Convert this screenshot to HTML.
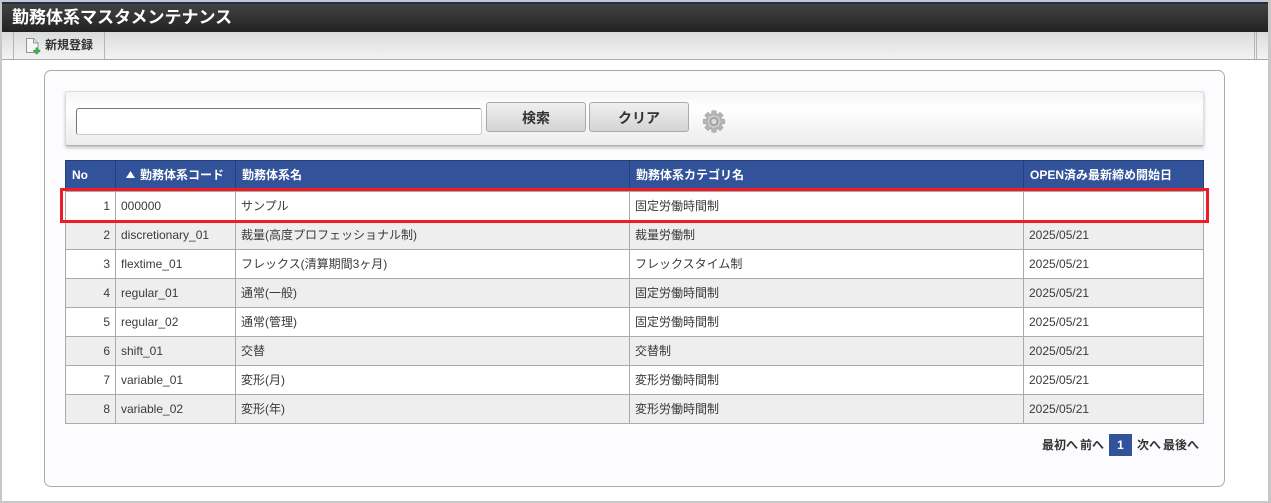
<!DOCTYPE html>
<html><head><meta charset="utf-8"><style>
html,body{margin:0;padding:0}
body{width:1271px;height:503px;position:relative;overflow:hidden;background:#fff;font-family:"Liberation Sans","Noto Sans CJK JP",sans-serif;color:#333}
div,span{position:absolute;box-sizing:border-box;white-space:nowrap}
.c{font-size:12px;line-height:16px;color:#3a3a3a}
.h{font-size:12px;font-weight:bold;color:#fff;line-height:16px}
.row{left:65px;width:1139px;height:29px;border-bottom:1px solid #aaa}
.v{width:1px;background:#aaa}
.hv{width:1px;background:#233f78;top:161px;height:29px}
.btn{top:102px;width:100px;height:30px;border:1px solid #aaa;border-radius:3px;background:linear-gradient(#f0f0f0,#d4d4d4);font-size:14px;font-weight:bold;text-align:center;line-height:30px;color:#333}
.p{font-size:12px;font-weight:bold;color:#333;line-height:16px;top:437px}
</style></head><body>
<div style="left:0;top:0;width:1271px;height:503px;border:solid #c8c8c8;border-width:2px 3px 2px 2px"></div>
<div style="left:2px;top:2px;width:1266px;height:30px;background:linear-gradient(#454545,#222)"></div>
<div style="left:2px;top:2px;width:1266px;height:2px;background:#1f2d50"></div>
<div style="left:12px;top:7px;font-size:17px;font-weight:bold;color:#fff;line-height:22px">勤務体系マスタメンテナンス</div>
<div style="left:2px;top:32px;width:1266px;height:28px;background:linear-gradient(#dbdbdb,#f3f3f3);border-bottom:1px solid #aaa"></div>
<div style="left:13px;top:32px;width:1px;height:27px;background:#b5b5b5"></div>
<div style="left:104px;top:32px;width:1px;height:27px;background:#b5b5b5"></div>
<div style="left:1254px;top:32px;width:1px;height:27px;background:#b5b5b5"></div>
<div style="left:1256px;top:32px;width:1px;height:27px;background:#b5b5b5"></div>
<svg style="position:absolute;left:24px;top:36px" width="18" height="20" viewBox="0 0 18 20">
<path d="M2.5 2.5H9.5L14 7V16.5H2.5Z" fill="#f6f8f8" stroke="#8d9a9a"/><path d="M9.5 2.5V7H14" fill="#dfe4e4" stroke="#8d9a9a"/>
<path d="M9.5 14H11.7V11.8H13.9V14H16V16H13.9V18H11.7V16H9.5Z" fill="#3bb54a" stroke="#2b9a3c" stroke-width=".4"/></svg>
<div style="left:45px;top:37px;font-size:12px;font-weight:bold;line-height:16px;color:#333">新規登録</div>

<div style="left:44px;top:70px;width:1181px;height:417px;border:1px solid #aaa;border-radius:7px;background:#fcfcff"></div>
<div style="left:65px;top:91px;width:1139px;height:55px;border:1px solid #ddd;border-bottom:1px solid #b0b0b0;border-radius:2px;background:linear-gradient(#f4f4f4,#fff 30%,#ececec);box-shadow:0 2px 3px #c4c4c4"></div>
<div style="left:76px;top:108px;width:406px;height:27px;border:1px solid #777;border-bottom-color:#ccc;border-right-color:#ccc;border-radius:3px;background:#fff"></div>
<div class="btn" style="left:486px">検索</div>
<div class="btn" style="left:589px">クリア</div>
<svg style="position:absolute;left:702px;top:110px" width="24" height="23" viewBox="0 0 24 23">
<g fill="#b4b4b4" stroke="#a0a0a0" stroke-width=".5"><circle cx="12" cy="11.5" r="8"/>
<rect x="9.6" y="0.6" width="4.8" height="21.8" rx=".8"/><rect x="9.6" y="0.6" width="4.8" height="21.8" rx=".8" transform="rotate(45 12 11.5)"/><rect x="9.6" y="0.6" width="4.8" height="21.8" rx=".8" transform="rotate(90 12 11.5)"/><rect x="9.6" y="0.6" width="4.8" height="21.8" rx=".8" transform="rotate(135 12 11.5)"/></g>
<circle cx="12" cy="11.5" r="6.5" fill="#c8c8c8"/><circle cx="12" cy="11.5" r="4.3" fill="#979797"/><circle cx="12" cy="11.5" r="2.8" fill="#dcdcdc"/></svg>

<div style="left:65px;top:160px;width:1139px;height:31px;background:#32539a;border:1px solid #233f78;border-bottom:none"></div>
<div class="hv" style="left:115px"></div><div class="hv" style="left:235px"></div><div class="hv" style="left:629px"></div><div class="hv" style="left:1023px"></div>
<div class="h" style="left:72px;top:167px">No</div>
<svg style="position:absolute;left:126px;top:171px" width="9" height="7"><path d="M0 7L4.5 0L9 7Z" fill="#fff"/></svg>
<div class="h" style="left:140px;top:167px">勤務体系コード</div>
<div class="h" style="left:242px;top:167px">勤務体系名</div>
<div class="h" style="left:636px;top:167px">勤務体系カテゴリ名</div>
<div class="h" style="left:1030px;top:167px">OPEN済み最新締め開始日</div>

<div style="left:65px;top:191px;width:1139px;height:1px;background:#aaa"></div>
<div class="row" style="top:192px;background:#fff"></div>
<div class="row" style="top:221px;background:#eee"></div>
<div class="row" style="top:250px;background:#fff"></div>
<div class="row" style="top:279px;background:#eee"></div>
<div class="row" style="top:308px;background:#fff"></div>
<div class="row" style="top:337px;background:#eee"></div>
<div class="row" style="top:366px;background:#fff"></div>
<div class="row" style="top:395px;background:#eee"></div>
<div class="v" style="left:65px;top:191px;height:233px"></div>
<div class="v" style="left:115px;top:191px;height:233px"></div>
<div class="v" style="left:235px;top:191px;height:233px"></div>
<div class="v" style="left:629px;top:191px;height:233px"></div>
<div class="v" style="left:1023px;top:191px;height:233px"></div>
<div class="v" style="left:1203px;top:191px;height:233px"></div>

<div class="c" style="right:1161px;top:198px">1</div><div class="c" style="left:121px;top:198px">000000</div><div class="c" style="left:241px;top:198px">サンプル</div><div class="c" style="left:635px;top:198px">固定労働時間制</div>
<div class="c" style="right:1161px;top:227px">2</div><div class="c" style="left:121px;top:227px">discretionary_01</div><div class="c" style="left:241px;top:227px">裁量(高度プロフェッショナル制)</div><div class="c" style="left:635px;top:227px">裁量労働制</div><div class="c" style="left:1029px;top:227px">2025/05/21</div>
<div class="c" style="right:1161px;top:256px">3</div><div class="c" style="left:121px;top:256px">flextime_01</div><div class="c" style="left:241px;top:256px">フレックス(清算期間3ヶ月)</div><div class="c" style="left:635px;top:256px">フレックスタイム制</div><div class="c" style="left:1029px;top:256px">2025/05/21</div>
<div class="c" style="right:1161px;top:285px">4</div><div class="c" style="left:121px;top:285px">regular_01</div><div class="c" style="left:241px;top:285px">通常(一般)</div><div class="c" style="left:635px;top:285px">固定労働時間制</div><div class="c" style="left:1029px;top:285px">2025/05/21</div>
<div class="c" style="right:1161px;top:314px">5</div><div class="c" style="left:121px;top:314px">regular_02</div><div class="c" style="left:241px;top:314px">通常(管理)</div><div class="c" style="left:635px;top:314px">固定労働時間制</div><div class="c" style="left:1029px;top:314px">2025/05/21</div>
<div class="c" style="right:1161px;top:343px">6</div><div class="c" style="left:121px;top:343px">shift_01</div><div class="c" style="left:241px;top:343px">交替</div><div class="c" style="left:635px;top:343px">交替制</div><div class="c" style="left:1029px;top:343px">2025/05/21</div>
<div class="c" style="right:1161px;top:372px">7</div><div class="c" style="left:121px;top:372px">variable_01</div><div class="c" style="left:241px;top:372px">変形(月)</div><div class="c" style="left:635px;top:372px">変形労働時間制</div><div class="c" style="left:1029px;top:372px">2025/05/21</div>
<div class="c" style="right:1161px;top:401px">8</div><div class="c" style="left:121px;top:401px">variable_02</div><div class="c" style="left:241px;top:401px">変形(年)</div><div class="c" style="left:635px;top:401px">変形労働時間制</div><div class="c" style="left:1029px;top:401px">2025/05/21</div>

<div style="left:60px;top:188px;width:1149px;height:35px;border:3px solid #ee1c25"></div>

<div class="p" style="left:1042px">最初へ</div>
<div class="p" style="left:1080px">前へ</div>
<div style="left:1109px;top:434px;width:23px;height:22px;background:#32539a;color:#fff;font-size:12px;font-weight:bold;text-align:center;line-height:22px">1</div>
<div class="p" style="left:1137px">次へ</div>
<div class="p" style="left:1163px">最後へ</div>
</body></html>
